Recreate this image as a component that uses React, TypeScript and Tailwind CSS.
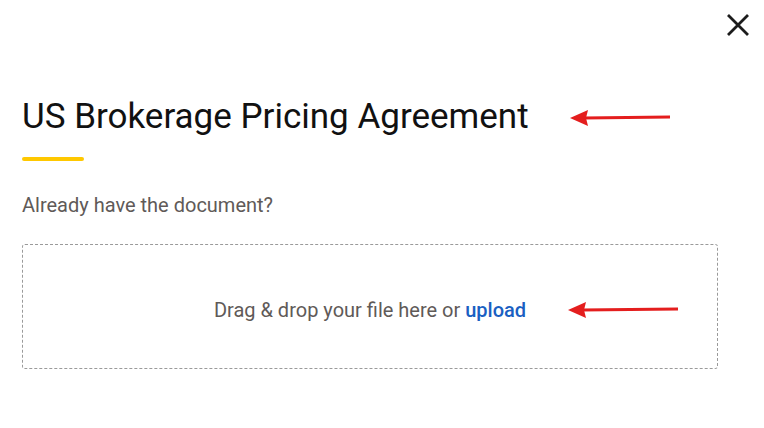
import React from "react";

function Arrow({ w }: { w: number }) {
  return (
    <svg width={w} height="20" viewBox={`0 0 ${w} 20`} className="shrink-0">
      <line x1="14" y1="10" x2={w} y2="9" stroke="#e41e1e" strokeWidth="3" />
      <polygon points="0,10 18,2 16,10 18,18" fill="#e41e1e" />
    </svg>
  );
}

export default function App() {
  return (
    <div className="w-[764px] h-[428px] bg-white relative" style={{ fontFamily: "Roboto, sans-serif" }}>
      <button className="absolute left-[724px] top-[11px] w-[28px] h-[28px] flex items-center justify-center">
        <svg width="24" height="24" viewBox="0 0 24 24">
          <path d="M2 2 L22 22 M22 2 L2 22" stroke="#1c1c1c" strokeWidth="2.8" />
        </svg>
      </button>
      <div className="pl-[22px] pt-[95px] pr-[46px]">
        <div className="flex items-center">
          <h1 className="text-[35px] leading-[44px] text-[#111] font-normal">US Brokerage Pricing Agreement</h1>
          <div className="ml-[41px] mt-[2px]"><Arrow w={100} /></div>
        </div>
        <div className="mt-[18px] w-[62px] h-[4px] rounded-full bg-[#ffc800]" />
        <p className="mt-[31px] text-[20px] leading-[26px] text-[#5f5a58]">Already have the document?</p>
        <div className="mt-[26px] h-[125px] border border-dashed border-[#9a9a9a] rounded-[3px] flex items-center justify-center relative">
          <p className="text-[20px] mt-[6px] text-[#5f5a58]">
            Drag &amp; drop your file here or <span className="text-[#1a5fc2] font-medium">upload</span>
          </p>
          <div className="absolute left-[545px] top-[55px]"><Arrow w={110} /></div>
        </div>
      </div>
    </div>
  );
}
